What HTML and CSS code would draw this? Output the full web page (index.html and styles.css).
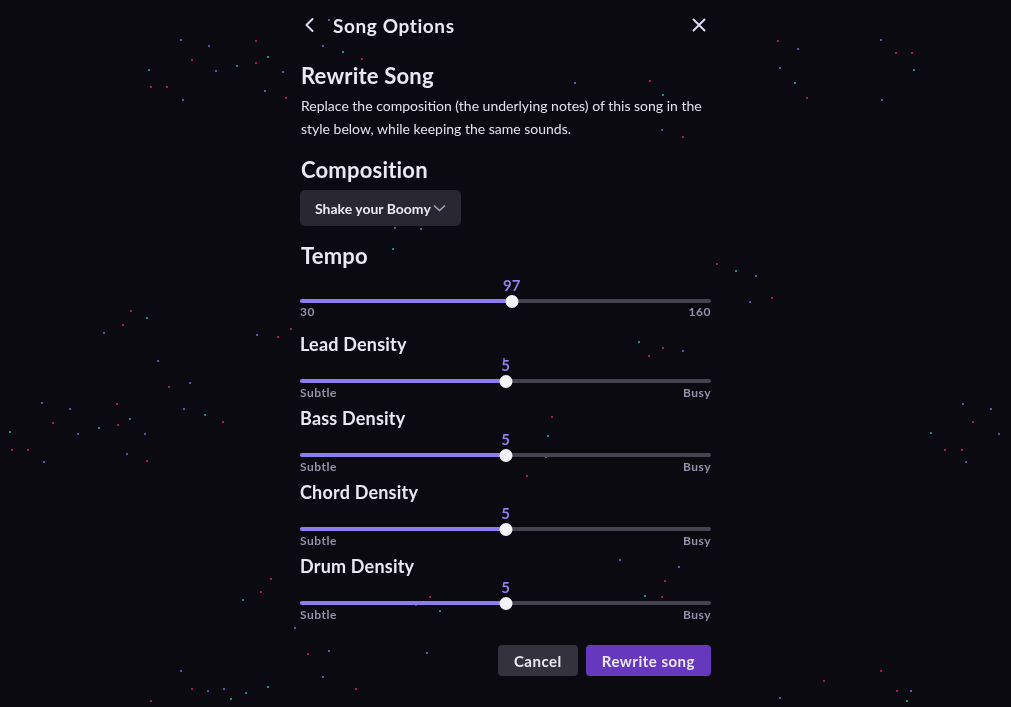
FILE: index.html
```html
<!DOCTYPE html>
<html lang="en">
<head>
    <meta charset="UTF-8">
    <meta name="viewport" content="width=device-width, initial-scale=1.0">
    <title>Song Options</title>
    <link rel="stylesheet" href="styles.css">
</head>
<body>
    <!-- floating note particles behind the dialog -->
    <svg class="particles" width="1011" height="707" viewBox="0 0 1011 707">
        <g class="red">
            <rect x="255" y="40" /><rect x="191" y="59" /><rect x="255" y="62" /><rect x="150" y="86" /><rect x="166" y="86" />
            <rect x="285" y="97" /><rect x="306" y="23" /><rect x="361" y="58" /><rect x="649" y="80" /><rect x="682" y="136" />
            <rect x="716" y="263" /><rect x="662" y="347" /><rect x="648" y="355" /><rect x="551" y="416" /><rect x="526" y="475" />
            <rect x="290" y="328" /><rect x="664" y="580" /><rect x="661" y="596" /><rect x="429" y="596" /><rect x="415" y="604" />
            <rect x="307" y="653" /><rect x="130" y="310" /><rect x="122" y="324" /><rect x="277" y="336" /><rect x="168" y="386" />
            <rect x="116" y="403" /><rect x="52" y="422" /><rect x="222" y="421" /><rect x="117" y="424" /><rect x="11" y="449" />
            <rect x="27" y="449" /><rect x="146" y="460" /><rect x="777" y="40" /><rect x="806" y="97" /><rect x="895" y="52" />
            <rect x="911" y="52" /><rect x="771" y="297" /><rect x="972" y="421" /><rect x="944" y="449" /><rect x="961" y="449" />
            <rect x="270" y="578" /><rect x="260" y="591" /><rect x="191" y="688" /><rect x="150" y="700" /><rect x="355" y="688" />
            <rect x="880" y="670" /><rect x="896" y="690" /><rect x="823" y="680" />
        </g>
        <g class="teal">
            <rect x="267" y="56" /><rect x="236" y="65" /><rect x="148" y="69" /><rect x="342" y="51" /><rect x="662" y="94" />
            <rect x="392" y="248" /><rect x="638" y="341" /><rect x="547" y="435" /><rect x="644" y="595" /><rect x="439" y="610" />
            <rect x="146" y="317" /><rect x="129" y="418" /><rect x="204" y="414" /><rect x="9" y="431" /><rect x="98" y="427" />
            <rect x="794" y="82" /><rect x="913" y="69" /><rect x="735" y="270" /><rect x="930" y="432" /><rect x="242" y="599" />
            <rect x="230" y="698" /><rect x="245" y="692" /><rect x="267" y="686" /><rect x="906" y="700" />
        </g>
        <g class="purple">
            <rect x="180" y="39" /><rect x="208" y="45" /><rect x="215" y="70" /><rect x="282" y="71" /><rect x="182" y="99" />
            <rect x="264" y="90" /><rect x="328" y="19" /><rect x="322" y="45" /><rect x="574" y="82" /><rect x="661" y="129" />
            <rect x="394" y="227" /><rect x="420" y="228" /><rect x="651" y="299" /><rect x="682" y="350" /><rect x="503" y="358" />
            <rect x="519" y="455" /><rect x="545" y="456" /><rect x="619" y="559" /><rect x="678" y="566" /><rect x="395" y="601" />
            <rect x="294" y="627" /><rect x="328" y="650" /><rect x="426" y="652" /><rect x="322" y="676" /><rect x="103" y="332" />
            <rect x="256" y="334" /><rect x="157" y="360" /><rect x="189" y="382" /><rect x="41" y="402" /><rect x="69" y="408" />
            <rect x="183" y="408" /><rect x="77" y="433" /><rect x="144" y="433" /><rect x="126" y="453" /><rect x="43" y="461" />
            <rect x="797" y="48" /><rect x="779" y="67" /><rect x="880" y="39" /><rect x="881" y="99" /><rect x="755" y="275" />
            <rect x="749" y="301" /><rect x="962" y="403" /><rect x="990" y="408" /><rect x="998" y="433" /><rect x="965" y="461" />
            <rect x="180" y="670" /><rect x="207" y="690" /><rect x="223" y="688" /><rect x="700" y="652" /><rect x="910" y="690" />
            <rect x="779" y="697" />
        </g>
    </svg>

    <div class="panel">
        <div class="header">
            <button class="icon-button back">
                <svg width="14" height="16" viewBox="0 0 14 16"><path d="M9.5 2 L3.5 8 L9.5 14" /></svg>
            </button>
            <span class="header-title">Song Options</span>
            <button class="icon-button close">
                <svg width="14" height="14" viewBox="0 0 14 14"><path d="M1.5 1.5 L12.5 12.5 M12.5 1.5 L1.5 12.5" /></svg>
            </button>
        </div>

        <h2>Rewrite Song</h2>
        <p class="description">Replace the composition (the underlying notes) of this song in the style below, while keeping the same sounds.</p>

        <h2 class="section">Composition</h2>
        <button class="dropdown">
            Shake your Boomy
            <svg width="13" height="8" viewBox="0 0 13 8"><path d="M1 1.5 L6.5 6.5 L12 1.5" /></svg>
        </button>

        <h2 class="section tempo-title">Tempo</h2>
        <div class="slider tempo">
            <div class="slider-value"><span style="left: 51.5%">97</span></div>
            <div class="track">
                <div class="fill" style="width: 51.5%"></div>
                <div class="thumb" style="left: 51.5%"></div>
            </div>
            <div class="slider-labels"><span>30</span><span>160</span></div>
        </div>

        <div class="density">
            <h3>Lead Density</h3>
            <div class="slider">
                <div class="slider-value"><span style="left: 50%">5</span></div>
                <div class="track">
                    <div class="fill" style="width: 50%"></div>
                    <div class="thumb" style="left: 50%"></div>
                </div>
                <div class="slider-labels"><span>Subtle</span><span>Busy</span></div>
            </div>
        </div>

        <div class="density">
            <h3>Bass Density</h3>
            <div class="slider">
                <div class="slider-value"><span style="left: 50%">5</span></div>
                <div class="track">
                    <div class="fill" style="width: 50%"></div>
                    <div class="thumb" style="left: 50%"></div>
                </div>
                <div class="slider-labels"><span>Subtle</span><span>Busy</span></div>
            </div>
        </div>

        <div class="density">
            <h3>Chord Density</h3>
            <div class="slider">
                <div class="slider-value"><span style="left: 50%">5</span></div>
                <div class="track">
                    <div class="fill" style="width: 50%"></div>
                    <div class="thumb" style="left: 50%"></div>
                </div>
                <div class="slider-labels"><span>Subtle</span><span>Busy</span></div>
            </div>
        </div>

        <div class="density">
            <h3>Drum Density</h3>
            <div class="slider">
                <div class="slider-value"><span style="left: 50%">5</span></div>
                <div class="track">
                    <div class="fill" style="width: 50%"></div>
                    <div class="thumb" style="left: 50%"></div>
                </div>
                <div class="slider-labels"><span>Subtle</span><span>Busy</span></div>
            </div>
        </div>

        <div class="actions">
            <button class="cancel-button">Cancel</button>
            <button class="rewrite-button">Rewrite song</button>
        </div>
    </div>
</body>
</html>
```

FILE: styles.css
```css
body {
    font-family: 'Lato', 'Open Sans', sans-serif;
    background: #0b0a10;
    color: #ebe8f3;
    margin: 0;
    min-height: 100vh;
    overflow: hidden;
}
.particles {
    position: fixed;
    top: 0;
    left: 0;
    z-index: 0;
}
.particles rect {
    width: 2px;
    height: 2px;
}
.particles .red { fill: #b8163f; }
.particles .teal { fill: #15917c; }
.particles .purple { fill: #5d51b4; }

.panel {
    position: relative;
    z-index: 1;
    width: 411px;
    margin: 0 auto;
}
button {
    font-family: inherit;
    border: none;
    cursor: pointer;
    outline: none;
}
.header {
    display: flex;
    align-items: center;
    height: 50px;
}
.icon-button {
    background: none;
    padding: 0;
    display: flex;
}
.icon-button svg path {
    fill: none;
    stroke: #ddd8f2;
    stroke-width: 2;
    stroke-linecap: round;
    stroke-linejoin: round;
}
.back {
    margin-left: 3px;
    margin-right: 16px;
}
.close {
    margin-left: auto;
    margin-right: 5px;
}
.header-title {
    font-size: 19px;
    font-weight: 700;
    letter-spacing: 0.6px;
}
h2 {
    font-size: 22px;
    font-weight: 700;
    margin: 12px 0 0 1px;
    line-height: 28px;
    letter-spacing: 0.2px;
}
.description {
    font-size: 14px;
    line-height: 23px;
    margin: 4px 0 0 1px;
    color: #e4e1ec;
}
.section {
    margin-top: 16px;
}
.dropdown {
    margin-top: 6px;
    height: 36px;
    padding: 0 15px;
    background: #292731;
    border-radius: 5px;
    color: #ebe8f3;
    font-size: 14px;
    font-weight: 700;
    display: flex;
    align-items: center;
    gap: 2px;
}
.dropdown svg path {
    fill: none;
    stroke: #aaa5c2;
    stroke-width: 1.5;
}
.tempo-title {
    margin-top: 16px;
}
.slider-value {
    position: relative;
    height: 16px;
    margin-bottom: 2px;
    color: #8f7ff0;
    font-size: 15px;
    font-weight: 700;
    line-height: 16px;
}
.slider-value span {
    position: absolute;
    transform: translateX(-50%);
}
.tempo .slider-value {
    margin-top: 7px;
}
.track {
    position: relative;
    height: 12px;
}
.track::before {
    content: '';
    position: absolute;
    left: 0;
    right: 0;
    top: 4px;
    height: 4px;
    border-radius: 2px;
    background: #46434f;
}
.fill {
    position: absolute;
    left: 0;
    top: 4px;
    height: 4px;
    border-radius: 2px;
    background: #8b7cf0;
}
.thumb {
    position: absolute;
    top: 0;
    width: 13px;
    height: 13px;
    border-radius: 50%;
    background: #f4f2fa;
    transform: translateX(-50%);
}
.slider-labels {
    display: flex;
    justify-content: space-between;
    font-size: 12px;
    font-weight: 700;
    line-height: 12px;
    letter-spacing: 0.5px;
    color: #9691ab;
}
.tempo .slider-labels {
    margin-top: -1px;
}
.density {
    margin-top: 9px;
}
.tempo + .density {
    margin-top: 16px;
}
h3 {
    font-size: 18px;
    font-weight: 700;
    margin: 0;
    line-height: 20px;
    letter-spacing: 0.2px;
}
.density .slider-value {
    margin-top: 3px;
}
.actions {
    display: flex;
    justify-content: flex-end;
    gap: 8px;
    margin-top: 24px;
}
.cancel-button,
.rewrite-button {
    height: 31px;
    padding: 0 16px;
    border-radius: 4px;
    font-size: 15px;
    font-weight: 700;
    letter-spacing: 0.5px;
    color: #ebe8f3;
}
.cancel-button {
    background: #34323d;
}
.rewrite-button {
    background: #6538bd;
}
```
